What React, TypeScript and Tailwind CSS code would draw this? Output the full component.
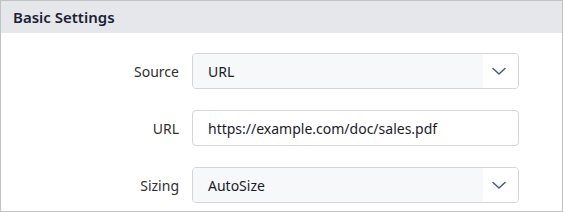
import React from 'react'

const Chevron = () => (
    <svg width="14" height="14" viewBox="0 0 14 14" fill="none" className="mr-[3px] text-[#4b5872]">
        <polyline points="1,4.5 7,10 13,4.5" stroke="currentColor" strokeWidth="1.5" strokeLinecap="round" strokeLinejoin="round" />
    </svg>
)

const SelectField = ({ label, value }: { label: string; value: string }) => (
    <div className="flex items-center">
        <label className="w-[178px] text-right text-[14px] text-[#2f2f2f]">{label}</label>
        <div className="ml-[13px] flex h-[36px] w-[327px] overflow-hidden rounded-[4px] border border-[#d3d5da]">
            <div className="flex flex-1 items-center bg-[#f7f8fa] pl-[15px] text-[14px] text-[#1b1b2a]">{value}</div>
            <div className="flex w-[35px] items-center justify-center bg-white">
                <Chevron />
            </div>
        </div>
    </div>
)

const TextField = ({ label, value }: { label: string; value: string }) => (
    <div className="flex items-center">
        <label className="w-[178px] text-right text-[14px] text-[#2f2f2f]">{label}</label>
        <input
            readOnly
            value={value}
            className="ml-[13px] h-[36px] w-[327px] rounded-[4px] border border-[#d3d5da] bg-white pl-[15px] text-[14px] text-[#1b1b2a] outline-none"
        />
    </div>
)

export default function App() {
    return (
        <div className="h-[212px] w-[564px] bg-white font-['Noto_Sans',sans-serif]">
            <div className="flex h-[212px] w-[563px] flex-col border border-[#c2c2c2]">
                <div className="flex h-[32px] items-center bg-[#e5e7eb] pl-[12px]">
                    <h1 className="text-[15px] font-semibold text-[#1a1f36]">Basic Settings</h1>
                </div>
                <div className="flex flex-col gap-[21px] pt-[20px]">
                    <SelectField label="Source" value="URL" />
                    <TextField label="URL" value="https://example.com/doc/sales.pdf" />
                    <SelectField label="Sizing" value="AutoSize" />
                </div>
            </div>
        </div>
    )
}
